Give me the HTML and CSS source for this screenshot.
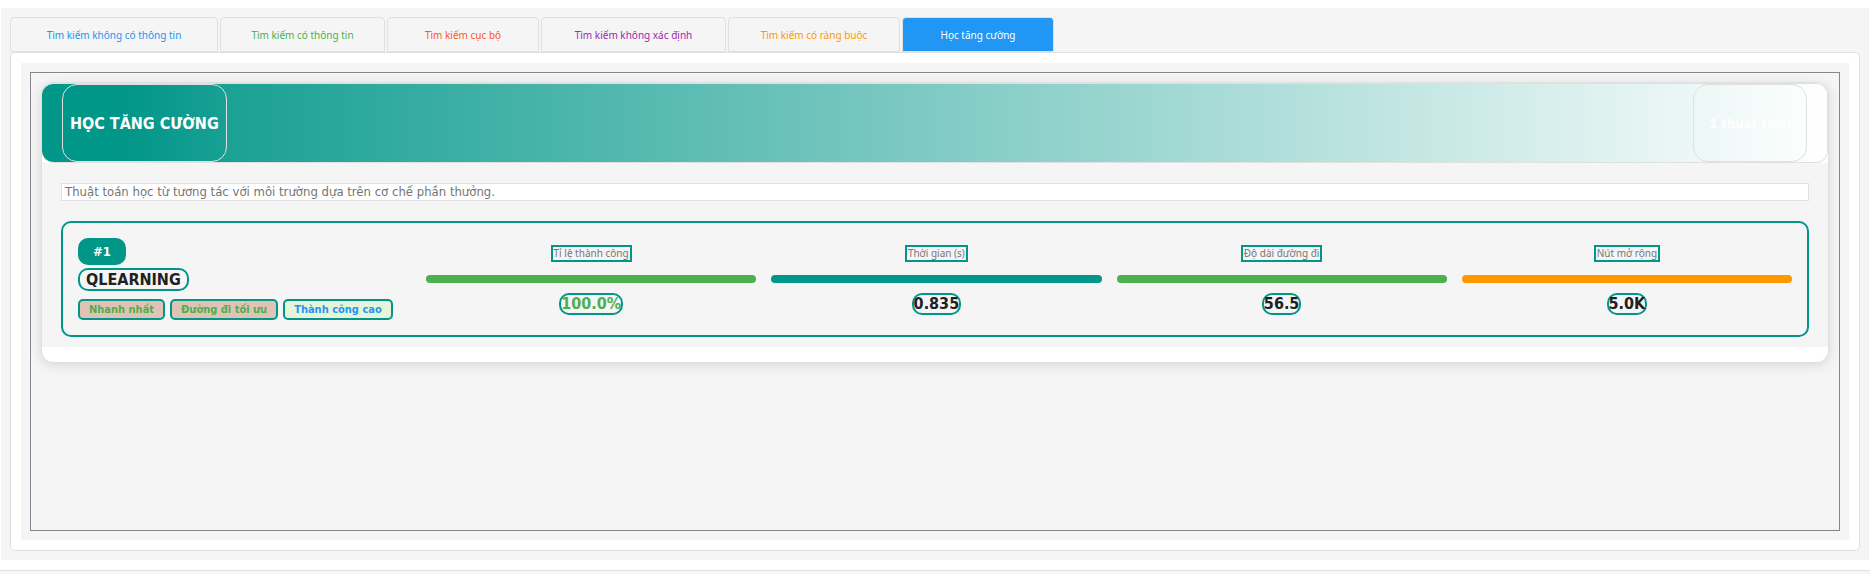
FILE: index.html
```html
<!DOCTYPE html>
<html lang="vi">
<head>
<meta charset="utf-8">
<title>Học tăng cường</title>
<link rel="stylesheet" href="styles.css">
</head>
<body>
<main class="panel">
  <div class="tabs" role="tablist">
    <button class="tab tab-uninformed" role="tab" type="button">Tìm kiếm không có thông tin</button>
    <button class="tab tab-informed" role="tab" type="button">Tìm kiếm có thông tin</button>
    <button class="tab tab-local" role="tab" type="button">Tìm kiếm cục bộ</button>
    <button class="tab tab-nondeterministic" role="tab" type="button">Tìm kiếm không xác định</button>
    <button class="tab tab-constraint" role="tab" type="button">Tìm kiếm có ràng buộc</button>
    <button class="tab tab-reinforcement" role="tab" type="button" aria-selected="true">Học tăng cường</button>
  </div>
  <div class="pane" role="tabpanel">
    <div class="pane-inner">
      <div class="scroll-area">
        <section class="card">
          <header class="card-header">
            <h1 class="card-title">HỌC TĂNG CƯỜNG</h1>
            <span class="card-count">1 thuật toán</span>
          </header>
          <div class="card-body">
            <p class="description">Thuật toán học từ tương tác với môi trường dựa trên cơ chế phần thưởng.</p>
            <article class="algorithm">
              <div class="summary">
                <span class="rank">#1</span>
                <h2 class="name">QLEARNING</h2>
                <div class="tags">
                  <span class="tag">Nhanh nhất</span>
                  <span class="tag">Đường đi tối ưu</span>
                  <span class="tag tag-success">Thành công cao</span>
                </div>
              </div>
              <div class="metrics">
                <div class="metric">
                  <span class="metric-label">Tỉ lệ thành công</span>
                  <div class="bar bar-green"></div>
                  <span class="metric-value value-green">100.0%</span>
                </div>
                <div class="metric">
                  <span class="metric-label">Thời gian (s)</span>
                  <div class="bar bar-teal"></div>
                  <span class="metric-value">0.835</span>
                </div>
                <div class="metric">
                  <span class="metric-label">Độ dài đường đi</span>
                  <div class="bar bar-green"></div>
                  <span class="metric-value">56.5</span>
                </div>
                <div class="metric">
                  <span class="metric-label">Nút mở rộng</span>
                  <div class="bar bar-orange"></div>
                  <span class="metric-value">5.0K</span>
                </div>
              </div>
            </article>
          </div>
        </section>
      </div>
    </div>
  </div>
</main>
<footer class="status"></footer>
</body>
</html>
```
FILE: styles.css
```css
* {
  box-sizing: border-box;
}

body {
  margin: 0;
  height: 100vh;
  overflow: hidden;
  display: flex;
  flex-direction: column;
  background: #fff;
  color: #212121;
  font-family: "DejaVu Sans Condensed", "Noto Sans", sans-serif;
  font-size: 12px;
}

.panel {
  flex: 1;
  display: flex;
  flex-direction: column;
  margin: 8px 1px 10px;
  padding: 9px;
  background: #f5f5f5;
}

.tabs {
  display: flex;
  gap: 2px;
}

.tab {
  height: 35px;
  padding: 0;
  border: 1px solid #e0e0e0;
  border-radius: 4px 4px 0 0;
  background: #f5f5f5;
  font-family: "Noto Sans", sans-serif;
  font-size: 10px;
}

.tab-uninformed { width: 208px; color: #2196f3; }
.tab-informed { width: 165px; color: #4caf50; }
.tab-local { width: 152px; color: #ff5722; }
.tab-nondeterministic { width: 185px; color: #9c27b0; }
.tab-constraint { width: 172px; color: #ff9800; }
.tab-reinforcement { width: 152px; background: #2196f3; color: #fff; }

.pane {
  flex: 1;
  display: flex;
  padding: 10px;
  border: 1px solid #e0e0e0;
  border-radius: 5px;
  background: #fff;
}

.pane-inner {
  flex: 1;
  display: flex;
  padding: 9px;
  background: #f5f5f5;
}

.scroll-area {
  flex: 1;
  padding: 9px 10px;
  border: 1px solid #828790;
}

.card {
  padding-bottom: 15px;
  border: 1px solid #e0e0e0;
  border-bottom: 0;
  border-radius: 12px;
  background: #fff;
  box-shadow: 0 3px 12px rgba(0, 0, 0, 0.13);
}

.card-header {
  display: flex;
  justify-content: space-between;
  height: 80px;
  padding: 0 20px;
  border: 1px solid #e0e0e0;
  border-left: 0;
  border-radius: 12px;
  background: linear-gradient(to right, #009688, #fff);
  color: #fff;
}

.card-title,
.card-count {
  display: flex;
  align-items: center;
  margin: 0;
  border: 1px solid #e0e0e0;
  border-radius: 15px;
  font-weight: bold;
}

.card-title {
  padding: 0 7px;
  background: linear-gradient(to right, #009688 35%, #18a094);
  font-size: 16px;
}

.card-count {
  padding: 0 15px;
  font-size: 13px;
}

.card-body {
  padding: 20px 19px 10px;
  background: #f5f5f5;
}

.description {
  margin: 0 0 20px;
  padding: 0 3px;
  border: 1px solid #e0e0e0;
  background: #fff;
  color: #757575;
  font-size: 13px;
  line-height: 16px;
}

.algorithm {
  display: flex;
  gap: 30px;
  padding: 15px;
  border: 2px solid #009688;
  border-radius: 10px;
}

.summary {
  flex: 0 0 318px;
  display: flex;
  flex-direction: column;
  align-items: flex-start;
}

.rank {
  padding: 0 15px;
  border-radius: 10px;
  background: #009688;
  color: #fff;
  font-size: 13px;
  font-weight: bold;
  line-height: 27px;
}

.name {
  margin: 3px 0 8px;
  padding: 0 6px;
  border: 2px solid #009688;
  border-radius: 10px;
  font-size: 16px;
  line-height: 19px;
}

.tags {
  display: flex;
  gap: 5px;
}

.tag {
  padding: 0 9px;
  border: 2px solid #009688;
  border-radius: 5px;
  background: #e0c3b4;
  color: #4caf50;
  font-size: 11px;
  font-weight: bold;
  line-height: 17px;
  white-space: nowrap;
}

.tag-success {
  background: #e6f4d9;
  color: #2196f3;
}

.metrics {
  flex: 1;
  display: grid;
  grid-template-columns: repeat(4, 1fr);
  gap: 15px;
}

.metric {
  display: flex;
  flex-direction: column;
  align-items: center;
  padding-top: 7px;
}

.metric-label {
  padding: 0 1px;
  border: 2px solid #009688;
  color: #757575;
  font-family: "Noto Sans", sans-serif;
  font-size: 10px;
  line-height: 13px;
}

.bar {
  width: 100%;
  height: 8px;
  margin: 13px 0 10px;
  border-radius: 4px;
}

.bar-green { background: #4caf50; }
.bar-teal { background: #009688; }
.bar-orange { background: #ff9800; }

.metric-value {
  border: 2px solid #009688;
  border-radius: 10px;
  font-size: 16px;
  font-weight: bold;
  line-height: 18px;
}

.value-green { color: #4caf50; }

.status {
  height: 4px;
  border-top: 1px solid #e0e0e0;
  background: #f5f5f5;
}
```
